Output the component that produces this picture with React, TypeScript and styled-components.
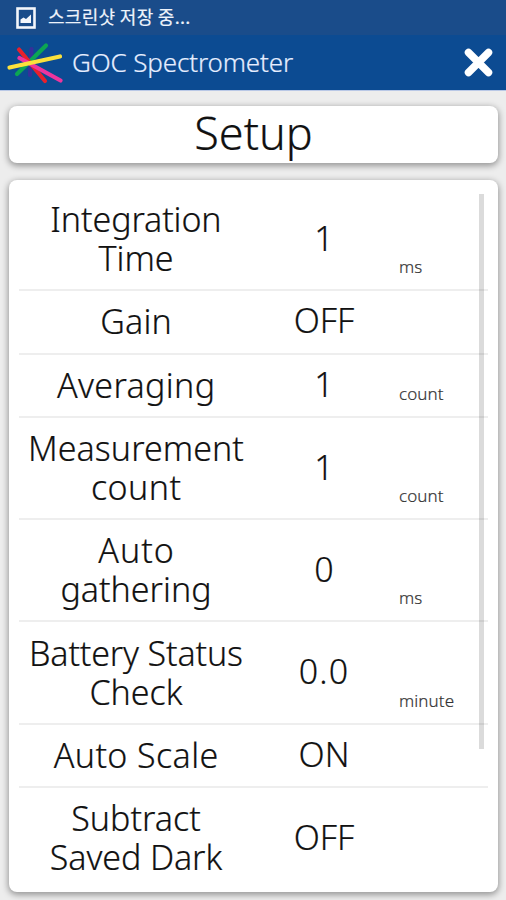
import React from "react";
import styled, { createGlobalStyle } from "styled-components";

const Global = createGlobalStyle`
  * { box-sizing: border-box; }
  html, body { margin: 0; padding: 0; }
  body { background: #ededed; overflow: hidden; }
`;

const Screen = styled.div`
  width: 506px;
  height: 900px;
  display: flex;
  flex-direction: column;
  overflow: hidden;
  background: #ededed;
  color: #111;
  font-family: "Noto Sans", "Open Sans", "Noto Sans CJK KR", sans-serif;
  font-weight: 300;
  -webkit-text-stroke: 0.2px currentColor;
`;

const StatusBar = styled.div`
  height: 35px;
  flex: none;
  display: flex;
  align-items: center;
  padding-left: 16px;
  gap: 12px;
  background: #1a4c8a;
  color: #eef3fb;
`;

const StatusText = styled.span`
  margin-bottom: 2px;
  font: 400 18px/33px "Noto Sans CJK KR", sans-serif;
  letter-spacing: 0.3px;
  white-space: nowrap;
`;

const AppBar = styled.header`
  height: 56px;
  flex: none;
  display: flex;
  align-items: center;
  padding: 0 12px 0 7px;
  background: #0c4b92;
  border-bottom: 1px solid #b9c8e6;
`;

const AppTitle = styled.h1`
  flex: 1;
  margin: 0 0 2px 9px;
  font-size: 26px;
  line-height: 54px;
  font-weight: 300;
  letter-spacing: -0.13px;
  color: #e6eeff;
  white-space: nowrap;
`;

const CloseButton = styled.button`
  display: flex;
  padding: 0;
  border: 0;
  background: none;
`;

const Card = styled.section`
  flex: none;
  margin: 0 8px 0 9px;
  border-radius: 8px;
  background: #fff;
  box-shadow: 0 2px 6px 1px rgba(0, 0, 0, 0.36);
`;

const TitleCard = styled(Card)`
  height: 57px;
  margin-top: 15px;
  display: flex;
  justify-content: center;
  font-size: 45px;
  line-height: 53px;
`;

const ListCard = styled(Card)`
  position: relative;
  height: 712px;
  margin-top: 17px;
  padding: 9px 10px 0;
`;

const Row = styled.div<{ $lines: number }>`
  height: ${(p) => (p.$lines === 2 ? 102.3 : 63.3)}px;
  display: grid;
  grid-template-columns: 234px 142px 1fr;
  align-items: center;
  border-bottom: 2px solid #eee;
  &:nth-last-child(2) { border-bottom-color: transparent; }
`;

const Label = styled.div`
  display: flex;
  flex-direction: column;
  align-items: center;
  font-size: 34px;
  line-height: 39px;
  white-space: nowrap;
`;

const Line = styled.span<{ $spacing: number }>`
  letter-spacing: ${(p) => p.$spacing}px;
  margin-right: ${(p) => -p.$spacing}px;
`;

const Value = styled.div<{ $spacing: number }>`
  padding-bottom: 2px;
  font-size: 34px;
  line-height: 39px;
  letter-spacing: ${(p) => p.$spacing}px;
  text-align: center;
`;

const Unit = styled.div`
  align-self: end;
  padding: 0 0 11px 4px;
  font-size: 17px;
  line-height: 22px;
  letter-spacing: 0.1px;
  color: #333;
`;

const ScrollThumb = styled.div`
  position: absolute;
  top: 14px;
  right: 14px;
  width: 5px;
  height: 555px;
  background: rgba(0, 0, 0, 0.14);
`;

type Setting = { label: [string, number][]; value: string; valueSpacing?: number; unit?: string };

const settings: Setting[] = [
  { label: [["Integration", -0.1], ["Time", 0]], value: "1", unit: "ms" },
  { label: [["Gain", 0.2]], value: "OFF" },
  { label: [["Averaging", 0.35]], value: "1", unit: "count" },
  { label: [["Measurement", 0.05], ["count", 0.4]], value: "1", unit: "count" },
  { label: [["Auto", 1], ["gathering", 0]], value: "0", unit: "ms" },
  { label: [["Battery Status", -0.15], ["Check", 0]], value: "0.0", valueSpacing: 1.2, unit: "minute" },
  { label: [["Auto Scale", 0.4]], value: "ON" },
  { label: [["Subtract", 0], ["Saved Dark", -0.1]], value: "OFF" },
];

const PictureIcon = () => (
  <svg width="20" height="22" viewBox="0 0 20 22">
    <rect x="1.5" y="1.5" width="17" height="19" fill="none" stroke="#f3f6fb" strokeWidth="2.6" />
    <path d="M4.5 16V12.5L7.5 10.5L10 12L15 7.5V16Z" fill="#f3f6fb" />
  </svg>
);

const Logo = () => (
  <svg width="56" height="44" viewBox="0 0 56 44" strokeWidth="4.2" strokeLinecap="round">
    <path d="M24.500 8L23 34" stroke="#37309a" />
    <path d="M39 4.500L10 33" stroke="#0ca653" />
    <path d="M12 8.500L38 40" stroke="#e8202c" />
    <path d="M12.500 17L53.500 39.500" stroke="#ee359d" />
    <path d="M2.500 26.500L53 15.500" stroke="#fbe13c" />
  </svg>
);

const CloseIcon = () => (
  <svg width="31" height="31" viewBox="0 0 31 31">
    <path d="M5.500 5.500L25.500 25.500M25.500 5.500L5.500 25.500" stroke="#fff" strokeWidth="7.500" strokeLinecap="round" />
  </svg>
);

export default function App() {
  return (
    <Screen>
      <Global />
      <StatusBar>
        <PictureIcon />
        <StatusText>스크린샷 저장 중...</StatusText>
      </StatusBar>
      <AppBar>
        <Logo />
        <AppTitle>GOC Spectrometer</AppTitle>
        <CloseButton aria-label="Close"><CloseIcon /></CloseButton>
      </AppBar>
      <TitleCard>Setup</TitleCard>
      <ListCard>
        {settings.map((s) => (
          <Row key={s.label[0][0]} $lines={s.label.length}>
            <Label>
              {s.label.map(([text, spacing]) => (
                <Line key={text} $spacing={spacing}>{text}</Line>
              ))}
            </Label>
            <Value $spacing={s.valueSpacing ?? 0}>{s.value}</Value>
            <Unit>{s.unit}</Unit>
          </Row>
        ))}
        <ScrollThumb />
      </ListCard>
    </Screen>
  );
}
